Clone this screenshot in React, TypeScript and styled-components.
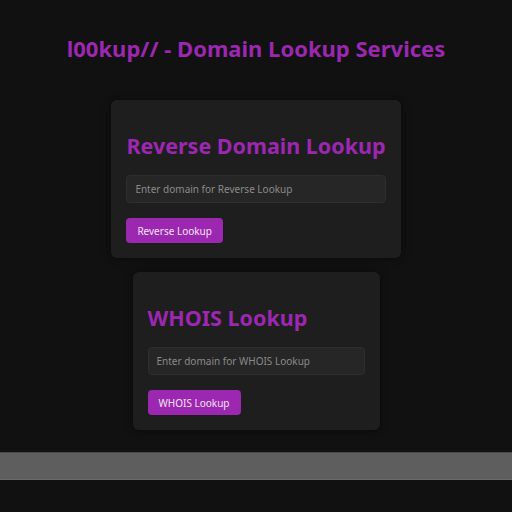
import styled, { createGlobalStyle } from 'styled-components';

const GlobalStyle = createGlobalStyle`
  html, body {
    margin: 0;
    padding: 0;
    background: #111111;
    font-family: 'Noto Sans', 'Open Sans', sans-serif;
  }
`;

const Page = styled.div`
  display: flex;
  flex-direction: column;
  align-items: center;
  padding-top: 33px;
`;

const Title = styled.h1`
  margin: 0 0 37px;
  font-size: 22px;
  line-height: 30px;
  font-weight: 700;
  color: #9c27b0;
`;

const Cards = styled.div`
  display: flex;
  flex-direction: column;
  align-items: center;
  gap: 14px;
`;

const Card = styled.section`
  display: flex;
  flex-direction: column;
  align-items: stretch;
  padding: 15px;
  background: #1e1e1e;
  border-radius: 6px;
  box-shadow: 0 0 8px rgba(0, 0, 0, 0.45);
`;

const CardTitle = styled.h2`
  margin: 15px 0 13px;
  font-size: 21.5px;
  line-height: 32px;
  font-weight: 700;
  color: #9c27b0;
  white-space: nowrap;
`;

const Input = styled.input`
  box-sizing: border-box;
  min-width: 217px;
  height: 28px;
  padding: 0 8px;
  background: #262626;
  border: 1px solid #2e2e2e;
  border-radius: 4px;
  color: #ddd;
  font-family: inherit;
  font-size: 10px;
  outline: none;

  &::placeholder {
    color: #8a8a8a;
  }
`;

const Button = styled.button`
  align-self: flex-start;
  margin-top: 15px;
  height: 25px;
  padding: 0 11px;
  background: #9c27b0;
  color: #f3e5f5;
  border: none;
  border-radius: 4px;
  font-family: inherit;
  font-size: 10px;
  cursor: pointer;
`;

const Footer = styled.footer`
  align-self: stretch;
  margin-top: 22px;
  height: 28px;
  box-sizing: border-box;
  background: #5e5e5e;
  border-top: 1px solid #4a4a4a;
  border-bottom: 1px solid #6a6a6a;
`;

const lookups = [
  { title: 'Reverse Domain Lookup', placeholder: 'Enter domain for Reverse Lookup', action: 'Reverse Lookup' },
  { title: 'WHOIS Lookup', placeholder: 'Enter domain for WHOIS Lookup', action: 'WHOIS Lookup' },
];

const App = () => {
  return (
    <>
      <GlobalStyle />
      <Page>
        <Title>l00kup// - Domain Lookup Services</Title>
        <Cards>
          {lookups.map((item) => (
            <Card key={item.title}>
              <CardTitle>{item.title}</CardTitle>
              <Input type="text" placeholder={item.placeholder} />
              <Button>{item.action}</Button>
            </Card>
          ))}
        </Cards>
        <Footer />
      </Page>
    </>
  );
};

export default App;
